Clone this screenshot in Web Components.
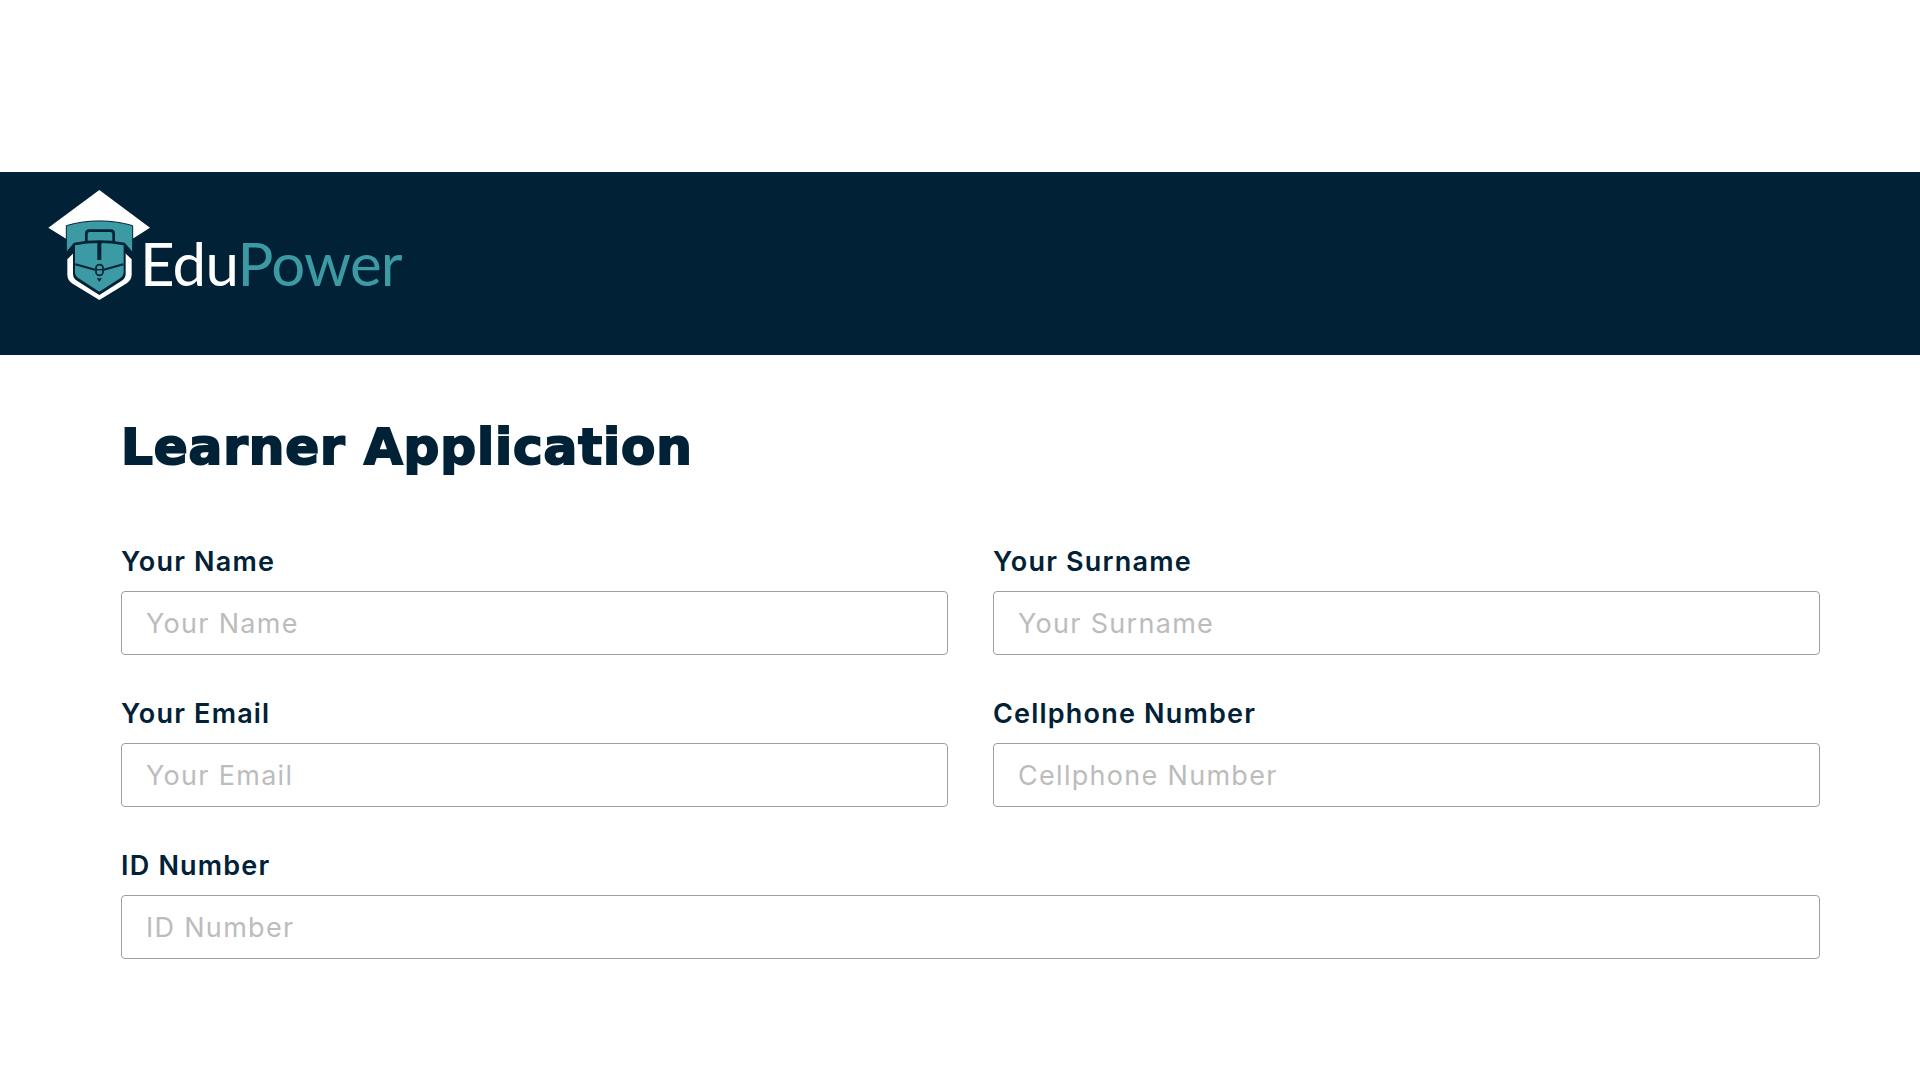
<!DOCTYPE html>
<html lang="en">
<head>
<meta charset="utf-8">
<title>Learner Application</title>
<style>
    html, body { margin: 0; background: #fff; }
    body { padding-top: 172px; font-family: "Inter", "Liberation Sans", sans-serif; color: #012136; }
</style>
</head>
<body>
<edu-header></edu-header>
<learner-form heading="Learner Application">
    <form-field label="Your Name"></form-field>
    <form-field label="Your Surname"></form-field>
    <form-field label="Your Email"></form-field>
    <form-field label="Cellphone Number"></form-field>
    <form-field label="ID Number" wide></form-field>
</learner-form>

<script>
class EduHeader extends HTMLElement {
    constructor() {
        super();
        this.attachShadow({ mode: 'open' });
        this.shadowRoot.innerHTML = `
            <style>
                :host {
                    display: flex;
                    align-items: flex-start;
                    height: 183px;
                    background: #012136;
                    padding: 8px 0 0 40px;
                    box-sizing: border-box;
                }
                svg { display: block; width: 120px; height: 130px; flex: none; }
                .name {
                    font-family: "Lato", sans-serif;
                    font-weight: 400;
                    font-size: 60px;
                    line-height: 60px;
                    letter-spacing: -0.8px;
                    margin: 53px 0 0 -20px;
                    color: #fff;
                }
                .name span { color: #3b9aa3; }
            </style>
            <svg viewBox="0 0 360 390">
                <path fill="#fff" d="M178 30 330 143 278 176H78L25 143Z"/>
                <path fill="#fff" d="M82 238 100 220H256L275 238V284C275 296 268 304 258 311L178 360 98 311C88 304 82 296 82 284Z"/>
                <path fill="#012136" d="M99 215H257V282C257 292 252 298 244 303L178 345 112 303C104 298 99 292 99 282Z"/>
                <path fill="#3b9aa3" stroke="#012136" stroke-width="3" d="M79 137C140 118 216 118 278 137V218L252 192C206 183 150 183 104 192L79 218Z"/>
                <path fill="#3b9aa3" d="M105 190C150 183 206 183 251 190V276C251 286 246 291 238 296L178 335 118 296C110 291 105 286 105 276Z"/>
                <path fill="#3b9aa3" stroke="#012136" stroke-width="8" d="M139 187V161C139 155 143 152 149 152H211C217 152 221 155 221 161V187"/>
                <path fill="none" stroke="#012136" stroke-width="8" d="M79 222 104 192C150 183 206 183 252 192L278 222"/>
                <path fill="none" stroke="#012136" stroke-width="6" d="M106 253 165 269M250 253 191 269"/>
                <path fill="none" stroke="#012136" stroke-width="12" d="M178 188V240"/>
                <rect x="168" y="254" width="21" height="32" rx="10" fill="none" stroke="#012136" stroke-width="5"/>
                <path fill="none" stroke="#012136" stroke-width="4" d="M169 269H188"/>
                <path fill="#012136" d="M170 295H186L178 305Z"/>
            </svg>
            <div class="name">Edu<span>Power</span></div>
        `;
    }
}

class LearnerForm extends HTMLElement {
    constructor() {
        super();
        this.attachShadow({ mode: 'open' });
        this.shadowRoot.innerHTML = `
            <style>
                :host { display: block; padding: 0 100px 0 121px; }
                h1 {
                    margin: 0;
                    padding-top: 61px;
                    height: 89px;
                    font-family: "DejaVu Sans", sans-serif;
                    font-size: 50px;
                    line-height: 62px;
                    font-weight: 700;
                    -webkit-text-stroke: 2px currentColor;
                    letter-spacing: 0.9px;
                }
                .grid {
                    display: grid;
                    grid-template-columns: 1fr 1fr;
                    column-gap: 45px;
                    row-gap: 39px;
                    margin-top: 37px;
                }
            </style>
            <h1></h1>
            <div class="grid"><slot></slot></div>
        `;
    }

    connectedCallback() {
        this.shadowRoot.querySelector('h1').textContent = this.getAttribute('heading');
    }
}

class FormField extends HTMLElement {
    constructor() {
        super();
        this.attachShadow({ mode: 'open' });
        this.shadowRoot.innerHTML = `
            <style>
                :host { display: block; }
                :host([wide]) { grid-column: 1 / -1; }
                label {
                    display: block;
                    height: 40px;
                    margin-bottom: 9px;
                    font-size: 27px;
                    line-height: 40px;
                    font-weight: 600;
                    letter-spacing: 1.2px;
                }
                input {
                    display: block;
                    width: 100%;
                    height: 64px;
                    box-sizing: border-box;
                    border: 1.5px solid #9a9fa8;
                    border-radius: 4px;
                    padding: 0 24px;
                    margin: 0;
                    outline: 0;
                    font: 400 27px "Inter", sans-serif;
                    letter-spacing: 1.3px;
                    color: #012136;
                    background: #fff;
                }
                input::placeholder { color: #bcbcbc; opacity: 1; }
            </style>
            <label for="f"></label>
            <input id="f" type="text">
        `;
    }

    connectedCallback() {
        const text = this.getAttribute('label');
        this.shadowRoot.querySelector('label').textContent = text;
        this.shadowRoot.querySelector('input').placeholder = text;
    }
}

customElements.define('edu-header', EduHeader);
customElements.define('learner-form', LearnerForm);
customElements.define('form-field', FormField);
</script>
</body>
</html>
